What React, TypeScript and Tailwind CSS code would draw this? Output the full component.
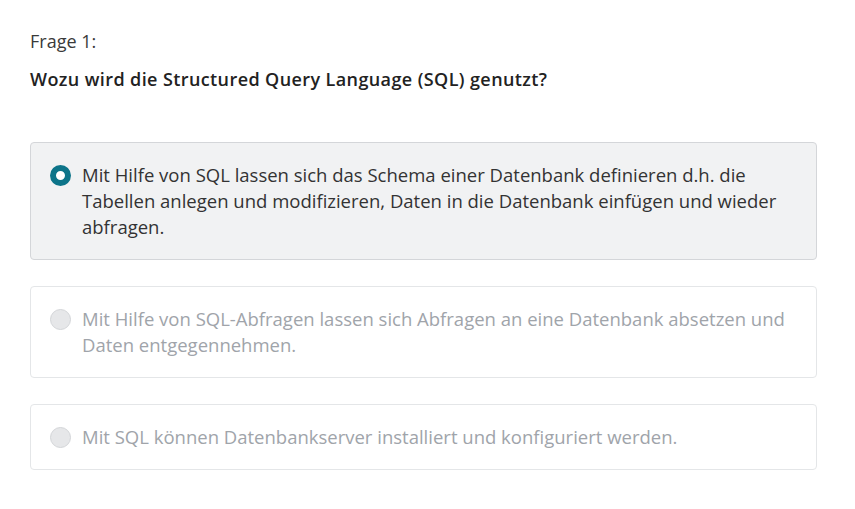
import React, { useState } from "react";

const options = [
  "Mit Hilfe von SQL lassen sich das Schema einer Datenbank definieren d.h. die Tabellen anlegen und modifizieren, Daten in die Datenbank einfügen und wieder abfragen.",
  "Mit Hilfe von SQL-Abfragen lassen sich Abfragen an eine Datenbank absetzen und Daten entgegennehmen.",
  "Mit SQL können Datenbankserver installiert und konfiguriert werden.",
];

export default function App() {
  const [selected, setSelected] = useState(0);

  return (
    <div
      className="min-h-screen bg-white px-[30px] pt-[28px] text-[#333]"
      style={{ fontFamily: '"Open Sans", sans-serif' }}
    >
      <p className="text-[18px] leading-[26px] text-[#3a3a3a]">Frage 1:</p>
      <p className="mt-[12px] text-[18px] font-semibold leading-[26px] tracking-[0.4px] text-[#222]">
        Wozu wird die Structured Query Language (SQL) genutzt?
      </p>

      <div className="mt-[50px] flex w-[787px] flex-col gap-[26px]">
        {options.map((text, i) => {
          const active = i === selected;
          return (
            <label
              key={i}
              onClick={() => setSelected(i)}
              className={
                active
                  ? "flex cursor-pointer items-start gap-[11px] rounded-[4px] border border-[#d4d6d9] bg-[#f1f2f3] px-[19px] py-[19px]"
                  : "flex cursor-pointer items-start gap-[11px] rounded-[4px] border border-[#e4e6e8] bg-white px-[19px] py-[19px]"
              }
            >
              <span className="flex h-[26px] shrink-0 items-center">
                {active ? (
                  <span className="block h-[21px] w-[21px] rounded-full border-[6.5px] border-[#0d7489] bg-white" />
                ) : (
                  <span className="block h-[21px] w-[21px] rounded-full border border-[#d3d5d8] bg-[#e6e7e9]" />
                )}
              </span>
              <span
                className={
                  active
                    ? "text-[18.5px] leading-[26px] text-[#333]"
                    : "text-[18.5px] leading-[26px] text-[#a0a4aa]"
                }
              >
                {text}
              </span>
            </label>
          );
        })}
      </div>
    </div>
  );
}
